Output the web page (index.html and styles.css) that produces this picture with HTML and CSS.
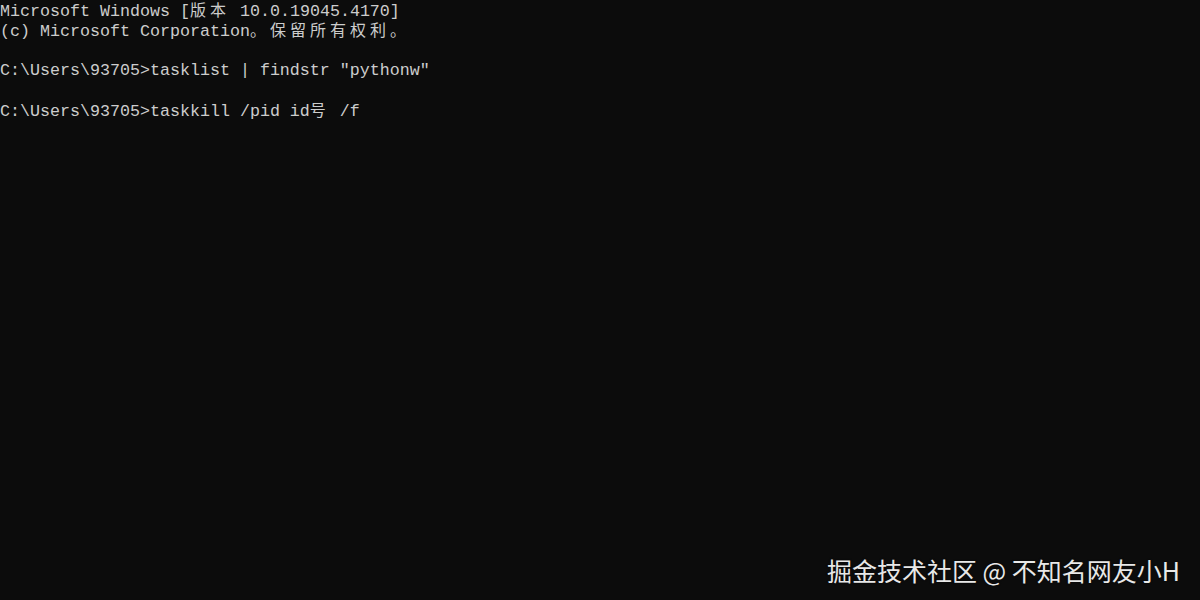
FILE: index.html
```html
<!DOCTYPE html>
<html lang="zh-CN">
<head>
<meta charset="UTF-8">
<title>命令提示符</title>
<link rel="stylesheet" href="styles.css">
</head>
<body>
<div class="console">
    <div class="line">Microsoft Windows [<span class="wide">版本</span> 10.0.19045.4170]</div>
    <div class="line">(c) Microsoft Corporation<span class="wide">。保留所有权利。</span></div>
    <div class="line"></div>
    <div class="line">C:\Users\93705&gt;tasklist | findstr "pythonw"</div>
    <div class="line"></div>
    <div class="line">C:\Users\93705&gt;taskkill /pid id<span class="wide">号</span> /f</div>
</div>
<div class="watermark">掘金技术社区 @ 不知名网友小H</div>
</body>
</html>
```
FILE: styles.css
```css
html, body {
    margin: 0;
    height: 100%;
    background-color: #0c0c0c;
}
body {
    position: relative;
    overflow: hidden;
}
.console {
    font-family: "Liberation Mono", "Noto Sans CJK SC", monospace;
    font-size: 16.667px;
    line-height: 20px;
    color: #cccccc;
    padding-top: 1px;
}
.line {
    height: 20px;
    white-space: pre;
}
.wide {
    font-family: "Noto Sans CJK SC", sans-serif;
    font-size: 16px;
    line-height: 1;
    letter-spacing: 4px;
}
.watermark {
    position: absolute;
    right: 20px;
    bottom: 15px;
    font-family: "Noto Sans CJK SC", sans-serif;
    font-size: 25px;
    line-height: 30px;
    color: #e8e8e8;
    text-shadow: 0 0 2px rgba(0, 0, 0, 0.6);
}
```
